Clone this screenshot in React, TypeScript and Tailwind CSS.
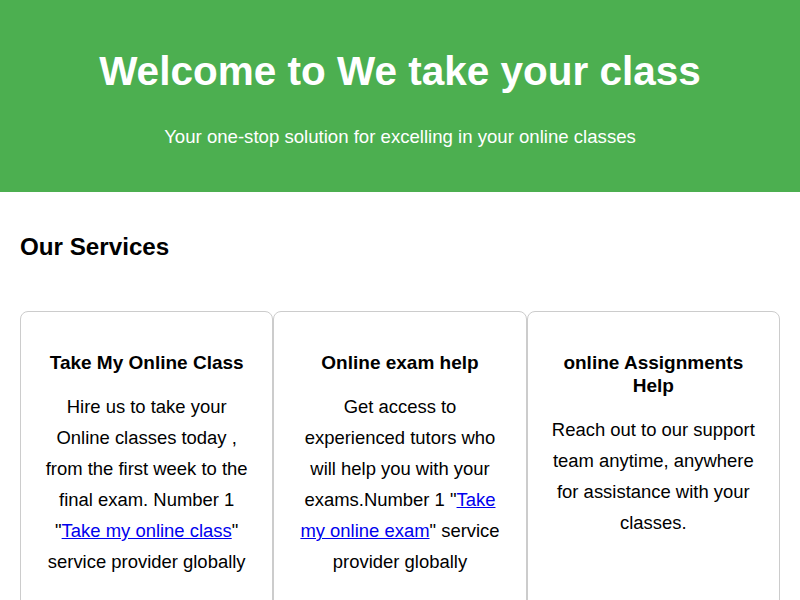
import React from 'react';

type Service = {
  title: string;
  body: React.ReactNode;
};

const services: Service[] = [
  {
    title: 'Take My Online Class',
    body: (
      <>
        Hire us to take your Online classes today , from the first week to the final exam. Number 1 "
        <a href="#" className="text-[#0000ee] underline">
          Take my online class
        </a>
        " service provider globally
      </>
    ),
  },
  {
    title: 'Online exam help',
    body: (
      <>
        Get access to experienced tutors who will help you with your exams.Number 1 "
        <a href="#" className="text-[#0000ee] underline">
          Take my online exam
        </a>
        " service provider globally
      </>
    ),
  },
  {
    title: 'online Assignments Help',
    body: <>Reach out to our support team anytime, anywhere for assistance with your classes.</>,
  },
];

const App: React.FC = () => {
  return (
    <div className="min-h-screen bg-white text-black font-['Liberation_Sans',Arial,sans-serif]">
      {/* Header */}
      <header className="bg-[#4caf50] text-white text-center pt-[48px] pb-[45px]">
        <h1 className="text-[40.5px] font-bold leading-[46px]">Welcome to We take your class</h1>
        <p className="mt-[32px] text-[18.6px] leading-[21px]">
          Your one-stop solution for excelling in your online classes
        </p>
      </header>

      {/* Services */}
      <section className="px-[20px] pt-[41px]">
        <h2 className="text-[24.2px] font-bold leading-[28px]">Our Services</h2>
        <div className="mt-[50px] flex">
          {services.map((s) => (
            <div
              key={s.title}
              className="flex-1 border border-[#cccccc] rounded-[8px] px-[20px] pt-[39px] pb-[44px] text-center"
            >
              <h3 className="text-[19px] font-bold leading-[23px]">{s.title}</h3>
              <p className="mt-[17px] text-[18.45px] leading-[31px]">{s.body}</p>
            </div>
          ))}
        </div>
      </section>
    </div>
  );
};

export default App;
